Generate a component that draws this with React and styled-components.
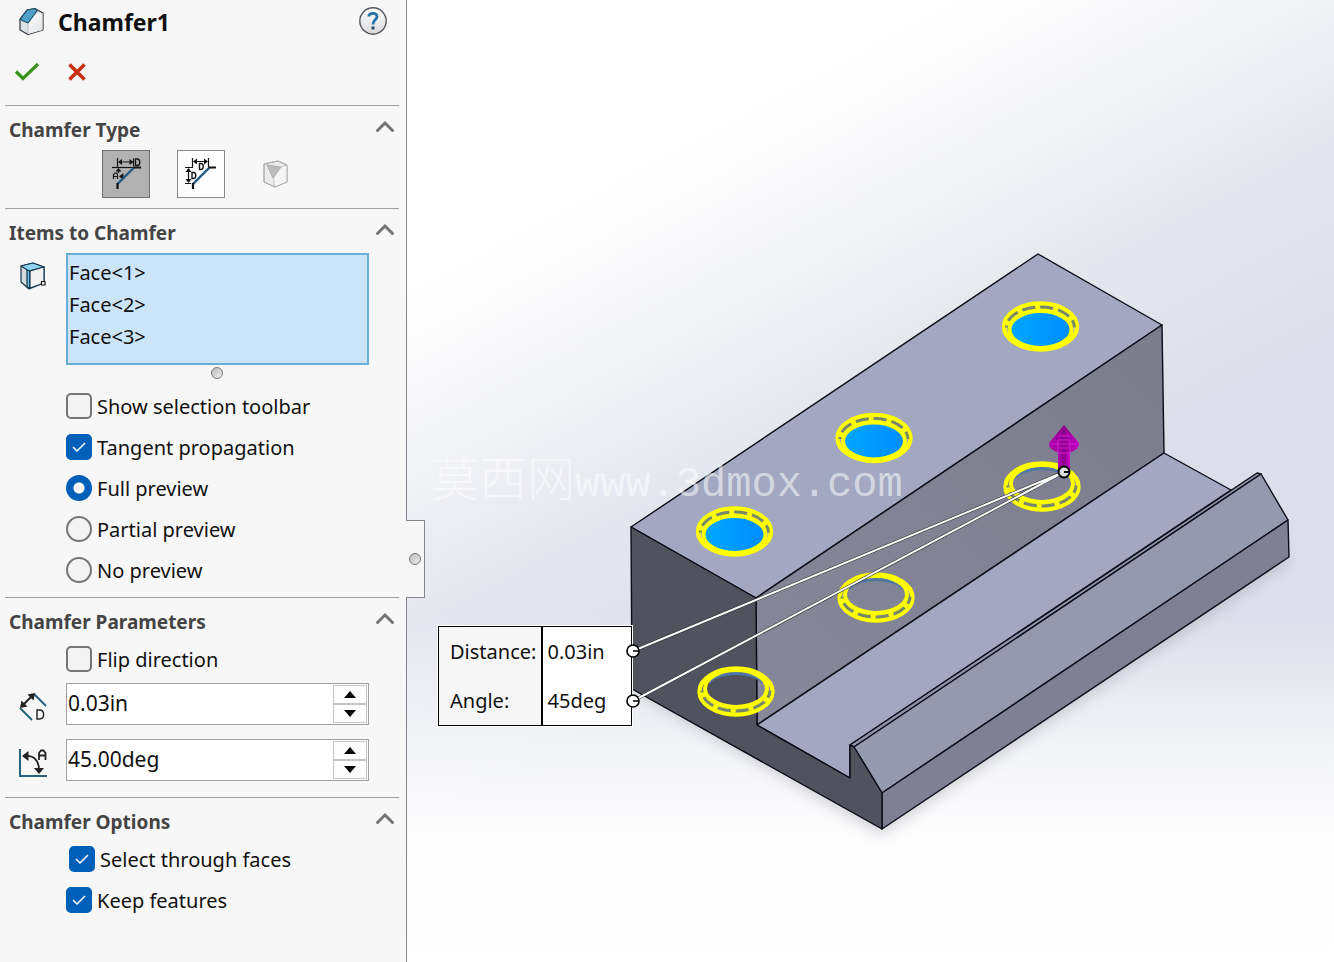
import styled, { createGlobalStyle } from "styled-components";

const GlobalStyle = createGlobalStyle`
  * {
    box-sizing: border-box;
  }
  body {
    margin: 0;
    font-family: "Noto Sans", "Open Sans", sans-serif;
    font-size: 20px;
    color: #111;
  }
  svg {
    display: block;
  }
`;

const CubeIcon = () => (
  <svg width="28" height="30" viewBox="0 0 28 30" strokeLinejoin="round">
    <defs>
      <linearGradient id="cubeFront" x1="0" y1="0" x2="1" y2="1">
        <stop offset="0" stopColor="#fff" />
        <stop offset="1" stopColor="#dfe2e4" />
      </linearGradient>
    </defs>
    <path d="M2 12 9 3 17 1.500 25 6V23L10 27.500 2 23Z" fill="#dde2e5" stroke="#33383c" strokeWidth="1.2" />
    <path d="M10 27V16L18 6 24.500 6.500V23Z" fill="url(#cubeFront)" />
    <path d="M2 12.500 9 3 17 1.500 19 4 10 16Z" fill="#4f9fc9" stroke="#1f4f6a" strokeWidth="1.2" />
    <path d="M10 16V27" stroke="#b5b9bc" />
  </svg>
);

const HelpIcon = () => (
  <svg width="30" height="30" viewBox="0 0 30 30">
    <defs>
      <linearGradient id="help" x1="0" y1="0" x2="0" y2="1">
        <stop offset="0" stopColor="#fff" />
        <stop offset="1" stopColor="#d9dadc" />
      </linearGradient>
    </defs>
    <circle cx="15" cy="14" r="13.2" fill="url(#help)" stroke="#55585c" strokeWidth="1.4" />
    <path d="M10.800 9.500C11 5.500 19 5 19 9.500C19 13 15 12.800 15 17.500" fill="none" stroke="#2374a8" strokeWidth="2.8" />
    <rect x="13.500" y="19.500" width="3" height="3" fill="#1d4a70" />
  </svg>
);

const CheckIcon = () => (
  <svg width="26" height="22" viewBox="0 0 26 22">
    <path d="M2 10.5 9 17.5 24 3" fill="none" stroke="#36941c" strokeWidth="3.2" />
  </svg>
);

const CrossIcon = () => (
  <svg width="20" height="20" viewBox="0 0 20 20">
    <path d="M2.5 2.5 17.5 17.5M17.5 2.5 2.5 17.5" stroke="#c62f12" strokeWidth="3.6" />
  </svg>
);

const ChevronIcon = () => (
  <svg width="20" height="14" viewBox="0 0 20 14">
    <path d="M2.500 11.5 10 4 17.500 11.5" fill="none" stroke="#747474" strokeWidth="3" strokeLinecap="round" />
  </svg>
);

const AngleDistanceIcon = () => (
  <svg width="46" height="46" viewBox="0 0 46 46" fill="none" stroke="#151515">
    <path d="M14.5 7V16M30.5 7.5V15M16 11H29" strokeWidth="1.2" />
    <path d="M15 11 19 8V14ZM30.500 11 26.500 8V14Z" fill="#151515" stroke="none" />
    <path d="M32.500 8V14.500H34.500C37.500 14.500 37.500 8 34.500 8Z" strokeWidth="1.4" />
    <path d="M9 16.500H31" strokeWidth="1.2" />
    <path d="M15.500 17 12.500 20.500H18.500ZM16 25.500 20.500 22V29Z" fill="#151515" stroke="none" />
    <path d="M15.500 19V22" strokeWidth="1.4" />
    <path d="M10.500 28V23.500L12 22H13.500L14.500 23.500V28M10.500 25.500H14.500" strokeWidth="1.2" />
    <path d="M14.500 33 31 16.500" stroke="#235a80" strokeWidth="2.4" />
    <path d="M30 16.500H38M14.500 32V38" strokeWidth="2.2" />
  </svg>
);

const DistanceDistanceIcon = () => (
  <svg width="46" height="46" viewBox="0 0 46 46" fill="none" stroke="#151515">
    <path d="M14.500 7V16M30.500 7V16M16 10.500H29M7 16.500H15M7 32.500H13M10.500 18V31" strokeWidth="1.2" />
    <path d="M15 10.500 19 7.500V13.500ZM30 10.500 26 7.500V13.500ZM10.500 17 7.500 21H13.500ZM10.500 32 7.500 28H13.500Z" fill="#151515" stroke="none" />
    <path d="M21.500 12.500V18.500H23C26 18.500 26 12.500 23 12.500ZM14 21.500V27.500H15.500C18.500 27.500 18.500 21.500 15.500 21.500Z" fill="#fff" strokeWidth="1.400" />
    <path d="M15 33 31.500 16.500" stroke="#235a80" strokeWidth="2.4" />
    <path d="M30.500 16.500H38M15 32V38" strokeWidth="2.2" />
  </svg>
);

const VertexIcon = () => (
  <svg width="46" height="46" viewBox="0 0 46 46" strokeLinejoin="round" stroke="#adadad">
    <path d="M11 13 25 10 34 14V31L22 36 11 31Z" fill="#ececec" />
    <path d="M34 14V31L22 36V27L28 16Z" fill="#f5f5f5" stroke="none" />
    <path d="M14 14 28 16 20 27Z" fill="#bcbcbc" />
    <path d="M11 13 14 14M28 16 34 14M20 27 22 36" fill="none" stroke="#c8c8c8" />
    <path d="M11 13 25 10 34 14V31L22 36 11 31Z" fill="none" />
  </svg>
);

const EdgeIcon = () => (
  <svg width="28" height="30" viewBox="0 0 28 30" strokeLinejoin="round" stroke="#16384a" strokeWidth="1.2">
    <path d="M3 5 15 2 26 6V22L11 28 3 21Z" fill="#d5dadd" />
    <path d="M3 5 15 2 26 6 11 10Z" fill="#8fd3f3" />
    <path d="M9 9 12 10V27L9 26Z" fill="#62bdea" />
    <path d="M12 10 26 6V22L12 27Z" fill="#f2f2f2" />
    <rect x="23.500" y="20.500" width="3.500" height="3.500" fill="#fff" stroke="#111" />
  </svg>
);

const DistanceIcon = () => (
  <svg width="32" height="32" viewBox="0 0 32 32" fill="none">
    <path d="M16 3 28 15M2 17 14 29" stroke="#24647c" strokeWidth="2" />
    <path d="M5 14 14 5" stroke="#222" strokeWidth="2" />
    <path d="M2 17 3.500 9.500 9.500 15.500ZM17 2 15.500 9.500 9.500 3.500Z" fill="#222" />
    <path d="M19 19V28H21.500C27 28 27 19 21.500 19Z" stroke="#222" strokeWidth="1.400" />
  </svg>
);

const AngleIcon = () => (
  <svg width="32" height="32" viewBox="0 0 32 32" fill="none">
    <path d="M2 2V29H29" stroke="#24647c" strokeWidth="2" />
    <path d="M8 9C16 8.500 21 14 21 23" stroke="#222" strokeWidth="1.800" />
    <path d="M4 9 10.500 4V14ZM21 27 16 21H26Z" fill="#222" />
    <path d="M21 13V6L23 3.500H25.500L27.500 6V13M21 8.500H27.500" stroke="#222" strokeWidth="1.800" />
  </svg>
);

const rings = [
  { x: 633.5, y: 326.5, top: true },
  { x: 467, y: 438, top: true },
  { x: 327.5, y: 531.5, top: true },
  { x: 635, y: 486.5 },
  { x: 469, y: 597.5 },
  { x: 329, y: 691.5 },
];

// Chamfer preview: two rings offset from each other with a dashed seam in the gap
const Ring = ({ x, y, top }) => (
  <g transform={`translate(${x} ${y}) scale(1 ${top ? 1 : -1})`} fill="none">
    {top && <ellipse cy="3" rx="31" ry="19" fill="url(#hole)" />}
    {!top && <path d="M-28 9A30 15 0 0 0 28 9" stroke="#4e78a4" strokeWidth="4" />}
    <ellipse rx="36.500" ry="23" stroke="#ff0" strokeWidth="4.400" />
    <ellipse cy="3" rx="31" ry="18.500" stroke="#ff0" strokeWidth="4" />
    <path d="M-34 1A34 20 0 0 1 34 1" stroke="#ff0" strokeWidth="4" />
    <path
      d="M-34 1A34 20.500 0 0 1 34 1"
      stroke="#77876c"
      strokeWidth="3"
      strokeDasharray="13 5"
      strokeDashoffset="-7"
    />
  </g>
);

const Model = () => (
  <ModelSvg width="927" height="962" viewBox="0 0 927 962" role="img" aria-label="Part preview">
    <defs>
      <linearGradient id="hole">
        <stop offset="0" stopColor="#00a8ff" />
        <stop offset="1" stopColor="#008cff" />
      </linearGradient>
      <linearGradient id="wall" x1="0" y1="1" x2="1" y2="0">
        <stop offset="0" stopColor="#868799" />
        <stop offset="1" stopColor="#7b7c8c" />
      </linearGradient>
      <linearGradient id="arrow">
        <stop offset="0" stopColor="#b800b8" />
        <stop offset="0.5" stopColor="#8c008c" />
        <stop offset="1" stopColor="#cc00cc" />
      </linearGradient>
      <filter id="soft" x="-20%" y="-20%" width="140%" height="140%">
        <feGaussianBlur stdDeviation="7" />
      </filter>
    </defs>
    <path d="M224 690 474 834 882 562 870 540 474 800 230 670Z" fill="#9a9aa6" opacity="0.45" filter="url(#soft)" />
    <g stroke="#0c0c18" strokeWidth="1.400" strokeLinejoin="round">
      <path d="M224 527 631 254 755 325 349 598Z" fill="#a3a7c0" />
      <path d="M349 598 755 325 757 453 350 725Z" fill="url(#wall)" />
      <path d="M350 725 757 453 824 490 443 745V778Z" fill="#a3a7c0" />
      <path d="M443 745 850 473 854 474 447 747Z" fill="#8f93a9" />
      <path d="M447 747 854 474 881 520 475 793Z" fill="#9599ae" />
      <path d="M475 793 881 520 882 557 475 829Z" fill="#7f8094" />
      <path d="M224 527 349 598 350 725 443 778V745L447 747 475 793V829L225 689Z" fill="#50525d" />
    </g>
    {rings.map((ring) => (
      <Ring key={`${ring.x}-${ring.y}`} {...ring} />
    ))}
    <rect x="651" y="448" width="12" height="23" fill="url(#arrow)" />
    <path d="M657 425 672 443C673 456 641 456 642 443Z" fill="url(#arrow)" />
    <path d="M651 436H663M645 444H669M651 453V440H663V453ZM651 448H663" stroke="#d61cd6" fill="none" />
    <path d="M226 651 657 472 226 701" fill="none" stroke="#222" strokeWidth="3" />
    <path d="M226 651 657 472 226 701" fill="none" stroke="#fff" strokeWidth="2" />
    <circle cx="657" cy="472" r="5.500" fill="#ddd" stroke="#000" strokeWidth="2" />
    <path d="M657 472H662" stroke="#000" strokeWidth="2" />
  </ModelSvg>
);

const Section = ({ title, children }) => (
  <SectionWrapper>
    <SectionHeader>
      <SectionTitle>{title}</SectionTitle>
      <CollapseButton type="button" aria-label={`Collapse ${title}`}>
        <ChevronIcon />
      </CollapseButton>
    </SectionHeader>
    {children}
  </SectionWrapper>
);

const Option = ({ label, indent, ...props }) => (
  <OptionLabel $indent={indent}>
    <OptionInput {...props} />
    <OptionText>{label}</OptionText>
  </OptionLabel>
);

const NumberField = ({ icon, label, value }) => (
  <FieldRow>
    <FieldIcon>{icon}</FieldIcon>
    <SpinBox>
      <SpinInput aria-label={label} defaultValue={value} />
      <SpinButtons>
        <SpinButton type="button" aria-label={`Increase ${label}`}>
          <svg width="12" height="7" viewBox="0 0 12 7"><path d="M0 7 6 0 12 7Z" /></svg>
        </SpinButton>
        <SpinButton type="button" aria-label={`Decrease ${label}`}>
          <svg width="12" height="7" viewBox="0 0 12 7"><path d="M0 0 6 7 12 0Z" /></svg>
        </SpinButton>
      </SpinButtons>
    </SpinBox>
  </FieldRow>
);

const App = () => {
  return (
    <>
      <GlobalStyle />
      <Layout>
        <Panel>
          <PanelHeader>
            <CubeIcon />
            <PanelTitle>Chamfer1</PanelTitle>
            <IconButton type="button" aria-label="Help">
              <HelpIcon />
            </IconButton>
          </PanelHeader>
          <Actions>
            <IconButton type="button" aria-label="OK">
              <CheckIcon />
            </IconButton>
            <IconButton type="button" aria-label="Cancel">
              <CrossIcon />
            </IconButton>
          </Actions>

          <Section title="Chamfer Type">
            <TypeButtons>
              <TypeButton type="button" aria-label="Angle distance" $variant="active">
                <AngleDistanceIcon />
              </TypeButton>
              <TypeButton type="button" aria-label="Distance distance">
                <DistanceDistanceIcon />
              </TypeButton>
              <TypeButton type="button" aria-label="Vertex" $variant="flat" disabled>
                <VertexIcon />
              </TypeButton>
            </TypeButtons>
          </Section>

          <Section title="Items to Chamfer">
            <Selection>
              <FieldIcon>
                <EdgeIcon />
              </FieldIcon>
              <FaceList>
                <li>Face&lt;1&gt;</li>
                <li>Face&lt;2&gt;</li>
                <li>Face&lt;3&gt;</li>
              </FaceList>
            </Selection>
            <ResizeRow>
              <Grip />
            </ResizeRow>
            <Options>
              <Option type="checkbox" label="Show selection toolbar" />
              <Option type="checkbox" label="Tangent propagation" defaultChecked />
              <Option type="radio" name="preview" label="Full preview" defaultChecked />
              <Option type="radio" name="preview" label="Partial preview" />
              <Option type="radio" name="preview" label="No preview" />
            </Options>
          </Section>

          <Section title="Chamfer Parameters">
            <Options>
              <Option type="checkbox" label="Flip direction" />
            </Options>
            <Fields>
              <NumberField icon={<DistanceIcon />} label="Distance" value="0.03in" />
              <NumberField icon={<AngleIcon />} label="Angle" value="45.00deg" />
            </Fields>
          </Section>

          <Section title="Chamfer Options">
            <Options>
              <Option type="checkbox" label="Select through faces" defaultChecked indent />
              <Option type="checkbox" label="Keep features" defaultChecked />
            </Options>
          </Section>

          <PanelHandle type="button" aria-label="Hide panel">
            <Grip />
          </PanelHandle>
        </Panel>

        <Viewport>
          <Model />
          <Callout>
            <tbody>
              <tr>
                <th scope="row">Distance:</th>
                <td>0.03in</td>
              </tr>
              <tr>
                <th scope="row">Angle:</th>
                <td>45deg</td>
              </tr>
            </tbody>
          </Callout>
          <Anchors width="18" height="66" viewBox="0 0 18 66">
            <g fill="#fff" stroke="#000" strokeWidth="1.600">
              <circle cx="9" cy="8" r="6" />
              <circle cx="9" cy="58" r="6" />
              <path d="M9 8H15M9 58H15" />
            </g>
          </Anchors>
          <Watermark>
            莫西网<WatermarkUrl>www.3dmox.com</WatermarkUrl>
          </Watermark>
        </Viewport>
      </Layout>
    </>
  );
};

export default App;

const Layout = styled.div`
  display: flex;
  min-height: 100vh;
`;
const Panel = styled.aside`
  position: relative;
  z-index: 1;
  width: 407px;
  flex-shrink: 0;
  padding: 0 7px 0 5px;
  background-color: #f7f7f7;
  border-right: 1px solid #85858d;
`;
const PanelHeader = styled.header`
  display: flex;
  align-items: center;
  height: 44px;
  padding: 0 11px 0 13px;
`;
const PanelTitle = styled.h1`
  flex: 1;
  margin: 0 0 0 12px;
  font-size: 23px;
  font-weight: 700;
  line-height: 44px;
`;
const IconButton = styled.button`
  display: flex;
  padding: 0;
  border: none;
  background: none;
`;
const Actions = styled.div`
  display: flex;
  align-items: center;
  gap: 27px;
  height: 61px;
  padding: 0 0 6px 9px;
`;
const SectionWrapper = styled.section`
  border-top: 1px solid #a0a0a0;
`;
const SectionHeader = styled.div`
  display: flex;
  align-items: center;
  justify-content: space-between;
  height: 40px;
  padding: 8px 4px 0;
`;
const SectionTitle = styled.h2`
  margin: 0;
  font-size: 19px;
  font-weight: 700;
  line-height: 32px;
  color: #444;
`;
const CollapseButton = styled(IconButton)`
  padding-bottom: 8px;
`;
const TypeButtons = styled.div`
  display: flex;
  justify-content: center;
  gap: 27px;
  padding: 4px 3px 10px 0;
`;
const TypeButton = styled.button`
  width: 48px;
  height: 48px;
  padding: 0;
  border: 1px solid ${({ $variant }) => ($variant === "flat" ? "transparent" : $variant === "active" ? "#707070" : "#8a8a8a")};
  background-color: ${({ $variant }) => ($variant === "flat" ? "transparent" : $variant === "active" ? "#b1b1b1" : "#fdfdfd")};
`;
const FieldRow = styled.div`
  display: flex;
  padding-right: 30px;
`;
const Selection = styled(FieldRow)`
  padding-top: 4px;
`;
const FieldIcon = styled.div`
  flex-shrink: 0;
  width: 61px;
  padding: 8px 0 0 13px;
`;
const FaceList = styled.ul`
  flex: 1;
  height: 112px;
  margin: 0;
  padding: 2px 1px;
  list-style: none;
  line-height: 32px;
  border: 2px solid #66afd9;
  background-color: #cce4f7;
`;
const ResizeRow = styled.div`
  display: flex;
  justify-content: center;
  padding: 2px 0 6px 30px;
`;
const Grip = styled.span`
  width: 12px;
  height: 12px;
  border: 1px solid #777;
  border-radius: 50%;
  background: linear-gradient(135deg, #bbb, #eee);
`;
const Options = styled.div`
  padding-left: 61px;

  ${ResizeRow} + & {
    padding-bottom: 7px;
  }
`;
const OptionLabel = styled.label`
  display: flex;
  align-items: center;
  gap: 5px;
  height: 41px;
  padding-left: ${({ $indent }) => ($indent ? 3 : 0)}px;
`;
const OptionText = styled.span`
  padding-top: 2px;
`;
const OptionInput = styled.input`
  appearance: none;
  width: 26px;
  height: 26px;
  margin: 0;
  border: 2px solid #757575;
  border-radius: ${({ type }) => (type === "radio" ? "50%" : "5px")};
  background-color: #f3f3f3;

  &:checked {
    border-color: #005fb8;
    background: #005fb8 center no-repeat;
  }
  &[type="checkbox"]:checked {
    background-image: url("data:image/svg+xml,%3Csvg xmlns='http://www.w3.org/2000/svg' width='16' height='14'%3E%3Cpath d='M2 7l4 4 8-8' fill='none' stroke='white' stroke-width='1.5'/%3E%3C/svg%3E");
  }
  &[type="radio"]:checked {
    background-image: radial-gradient(circle, #fff 5px, #005fb8 6px);
  }
`;
const Fields = styled.div`
  display: flex;
  flex-direction: column;
  gap: 14px;
  padding: 4px 0 16px;
`;
const SpinBox = styled.div`
  display: flex;
  flex: 1;
  min-width: 0;
  height: 42px;
  border: 1px solid #a0a0a0;
  background-color: #fff;
`;
const SpinInput = styled.input`
  flex: 1;
  min-width: 0;
  padding: 0 1px 2px;
  border: none;
  outline: none;
  font: inherit;
  font-size: 21px;
  color: inherit;
  background: none;
`;
const SpinButtons = styled.div`
  display: flex;
  flex-direction: column;
  width: 35px;
  padding: 1px 1px 1px 0;
`;
const SpinButton = styled.button`
  display: flex;
  flex: 1;
  align-items: center;
  justify-content: center;
  padding: 0;
  border: 1px solid #c4c4c4;
  background-color: #fdfdfd;
`;
const PanelHandle = styled.button`
  position: absolute;
  top: 520px;
  left: 100%;
  display: flex;
  align-items: center;
  justify-content: center;
  width: 19px;
  height: 78px;
  padding: 0 1px 0 0;
  border: 1px solid #85858d;
  border-left: none;
  background-color: #f7f7f7;
`;
const Viewport = styled.main`
  position: relative;
  flex: 1;
  overflow: hidden;
  background:
    linear-gradient(180deg, transparent 64%, rgba(255, 255, 255, 0.7) 79%, rgba(255, 255, 255, 0.95) 88%, #fff 100%),
    linear-gradient(152deg, #fff 20%, #f3f4f7 32%, #e5e7ef 43%, #dcdfe9 58%);
`;
const ModelSvg = styled.svg`
  display: block;
`;
const Callout = styled.table`
  position: absolute;
  top: 626px;
  left: 31px;
  width: 194px;
  height: 100px;
  border-collapse: collapse;
  background-color: #fff;
  outline: 1px solid #fff;

  tbody {
    border: 1px solid #000;
  }
  th,
  td {
    padding: 0 0 0 5px;
    font-weight: 400;
    text-align: left;
  }
  th {
    width: 103px;
    padding-left: 11px;
    border-right: 2px solid #000;
    background-color: #f6f6f6;
  }
`;
const Anchors = styled.svg`
  position: absolute;
  top: 643px;
  left: 217px;
`;
const Watermark = styled.div`
  position: absolute;
  top: 445px;
  left: 24px;
  display: flex;
  align-items: baseline;
  font-family: "Noto Sans CJK SC", sans-serif;
  font-size: 48px;
  font-weight: 300;
  line-height: 60px;
  color: rgba(255, 255, 255, 0.55);
`;
const WatermarkUrl = styled.span`
  font-family: "Liberation Mono", monospace;
  font-size: 42px;
`;
